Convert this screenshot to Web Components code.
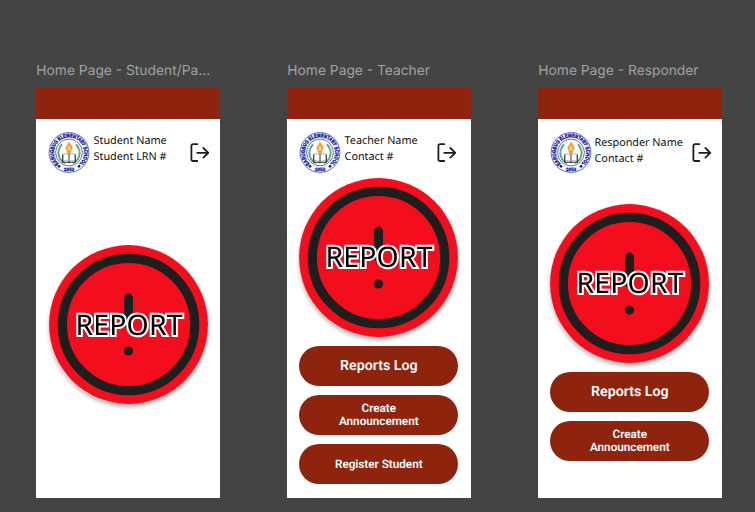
<!DOCTYPE html>
<html lang="en">
<head>
<meta charset="utf-8">
<title>Home pages</title>
<style>
html,body{margin:0;height:512px;overflow:hidden;background:#444}
</style>
</head>
<body>
<design-board></design-board>
<script>
const define = (name, html) => customElements.define(name, class extends HTMLElement {
  connectedCallback() {
    if (this.shadowRoot) return;
    const t = document.createElement('template');
    t.innerHTML = html;
    this.attachShadow({mode: 'open'}).append(t.content.cloneNode(true));
  }
});

define('school-seal', `
<style>:host{display:block;width:40px;height:41px;flex:none}svg{display:block;overflow:visible}</style>
<svg width="40" height="41" viewBox="-20 -20.5 40 41">
  <defs><path id="a" d="M-10.2 11.3A15.2 15.2 0 1 1 10.2 11.3"/></defs>
  <circle r="19.9" fill="#fff" stroke="#3a44bd" stroke-width=".8"/>
  <circle r="13.4" fill="#fff" stroke="#3a44bd" stroke-width=".8"/>
  <text font-family="Liberation Sans,Arial,sans-serif" font-weight="700" font-size="5.3" fill="#1018a8" stroke="#1018a8" stroke-width=".4"><textPath href="#a" textLength="72.5" lengthAdjust="spacingAndGlyphs">BARUGBUG ELEMENTARY SCHOOL</textPath></text>
  <text font-family="Liberation Sans,Arial,sans-serif" font-weight="700" font-size="4.8" fill="#1018a8" stroke="#1018a8" stroke-width=".3" x="0" y="18.5" text-anchor="middle" textLength="10.5">1953</text>
  <circle cx="-10" cy="13.8" r="1.4" fill="#1018a8"/><circle cx="10" cy="13.8" r="1.4" fill="#1018a8"/>
  <path d="M-7-8C-13-2-11 8-4 10.5M7-8C13-2 11 8 4 10.5" fill="none" stroke="#48a06c" stroke-width="2" stroke-dasharray="1.8 .3"/>
  <path d="M0-11.5C1-8 4-7 3.5-4C3-1-3-1-3.5-4C-4-6-2-6.5-1.5-8C-1-9-.5-10 0-11.5Z" fill="#f69b3c"/>
  <path d="M0-7C2-5 2-2.5 0-2.2C-2-2.5-2-5 0-7Z" fill="#f9e052"/>
  <path d="M-3-2H3L1.4 1V9H-1.4V1Z" fill="#e2a05f"/>
  <path d="M0 2.5C-2 1-4 1-5.8 1.5V8.3C-4 7.8-2 8 0 9.5C2 8 4 7.8 5.8 8.3V1.5C4 1 2 1 0 2.5Z" fill="#fff" stroke="#777" stroke-width=".6"/>
  <path d="M-6.4 2V9.8H-1L0 10.5L1 9.8H6.4V2M0 2.5V10" fill="none" stroke="#222" stroke-width=".9"/>
</svg>`);

define('logout-icon', `
<style>:host{display:block;width:20px;height:20px;flex:none}svg{display:block}</style>
<svg width="20" height="20" viewBox="0 0 20 20" fill="none" stroke="#1e1e1e" stroke-width="1.8" stroke-linecap="round" stroke-linejoin="round">
<path d="M7.3 1.2H3.2Q1.4 1.2 1.4 3V16.2Q1.4 18 3.2 18H7.3M7.2 9.8H18.2M13.4 5L18.3 9.8L13.4 14.6"/></svg>`);

define('user-header', `
<style>
:host{display:flex;align-items:flex-start;height:41px;color:#111;font:10.8px/16px "Noto Sans",sans-serif;padding:13.3px 0 0 var(--pad,13px)}
.t{margin:var(--drop,.8px) 0 0 var(--gap,4.6px);flex:1;white-space:nowrap}
logout-icon{margin:10.5px var(--right,10.6px) 0 0}
</style><school-seal></school-seal><div class="t"><slot></slot></div><logout-icon></logout-icon>`);

define('report-button', `
<style>:host{display:block;width:159px;height:159px;margin-left:var(--in,12.4px)}svg{display:block;overflow:visible;filter:drop-shadow(0 3px 2px rgba(0,0,0,.3))}
g{transform:translateY(var(--rise,0px))}</style>
<svg width="159" height="159" viewBox="-79.5 -79.5 159 159">
<circle r="79.4" fill="#f30d1d"/>
<circle r="66.2" fill="none" stroke="#1e1e1e" stroke-width="9.2"/>
<path d="M0-26.4V0" stroke="#1e1e1e" stroke-width="9" stroke-linecap="round"/>
<circle cy="26.5" r="4.6" fill="#1e1e1e"/>
<g font-family="Noto Sans,sans-serif" font-size="28.4" stroke-linejoin="miter">
<text x="-53" y="10.1" textLength="107" fill="#000" stroke="#fff" stroke-width="4" paint-order="stroke">REPORT</text>
</g>
</svg>`);

define('pill-button', `
<style>
:host{display:flex;align-items:center;justify-content:center;box-sizing:border-box;width:159px;height:40.2px;border-radius:20.1px;background:#8f240e;color:#fff;font:600 var(--fs,11.7px)/13.5px Roboto,sans-serif;text-align:center;margin-left:var(--in,12.4px);padding:1px 0 0 0}
:host([large]){--fs:14.2px;padding-top:1.8px}
</style><span><slot></slot></span>`);

define('phone-frame', `
<style>
:host{display:block;width:184.2px}
.label{height:33px;font:13.8px/17px Inter,sans-serif;color:#a2a2a2;white-space:nowrap;padding-top:8px;box-sizing:border-box}
.screen{height:410.4px;background:#fff}
.bar{height:31.2px;background:#8f240e}
.actions{display:flex;flex-direction:column;gap:9px;padding-top:var(--top)}
</style>
<div class="label"><slot name="label"></slot></div>
<div class="screen"><div class="bar"></div><slot name="user"></slot><div class="actions"><slot></slot></div></div>`);

define('design-board', `
<style>
:host{display:flex;gap:66.8px;padding:55px 0 0 36.3px;width:755px;height:512px;box-sizing:border-box;background:#444;text-rendering:geometricPrecision}
.s{--top:71.7px;--in:12.8px}
.t{--top:4.1px;--in:12px;--rise:-.6px}
.r{--top:30.1px;--in:12px;--rise:-.6px}
.s user-header{--pad:12.7px}
.t user-header{--pad:12.7px;--right:14.4px}
.r user-header{--pad:13.1px;--gap:3.2px;--drop:2.8px;--right:10.3px}
</style>
<phone-frame class="s"><span slot="label">Home Page - Student/Pa...</span>
<user-header slot="user">Student Name<br>Student LRN #</user-header>
<report-button></report-button></phone-frame>
<phone-frame class="t"><span slot="label">Home Page - Teacher</span>
<user-header slot="user">Teacher Name<br>Contact #</user-header>
<report-button></report-button><pill-button large>Reports Log</pill-button><pill-button>Create<br>Announcement</pill-button><pill-button>Register Student</pill-button></phone-frame>
<phone-frame class="r"><span slot="label">Home Page - Responder</span>
<user-header slot="user">Responder Name<br>Contact #</user-header>
<report-button></report-button><pill-button large>Reports Log</pill-button><pill-button>Create<br>Announcement</pill-button></phone-frame>`);
</script>
</body>
</html>
